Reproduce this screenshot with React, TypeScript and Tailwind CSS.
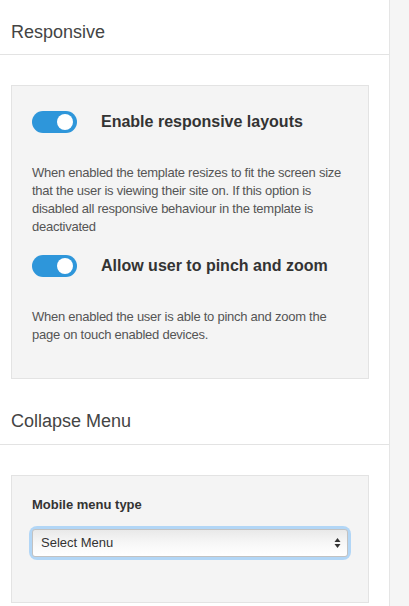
const font = { fontFamily: '"Liberation Sans", Arial, sans-serif' };

const Toggle = () => (
  <div className="relative h-[22px] w-[45px] shrink-0 rounded-full bg-[#2e96da]">
    <span className="absolute right-[4px] top-[3px] h-[16px] w-[16px] rounded-full bg-white" />
  </div>
);

const ToggleOption = ({ label, help }: { label: string; help: string }) => (
  <div>
    <div className="flex items-center gap-[24px]">
      <Toggle />
      <span className="text-[16px] font-bold leading-[22px] text-[#333]">{label}</span>
    </div>
    <p className="mt-[31px] text-[13px] leading-[18px] tracking-[-0.25px] text-[#555]">{help}</p>
  </div>
);

const SelectBox = () => (
  <div className="rounded-[5px] shadow-[0_0_0_3px_#b2d6f6]">
    <div className="relative flex h-[28px] items-center rounded-[3px] border border-[#c2c2c2] bg-gradient-to-b from-[#e9e9e9] via-[#f7f7f7] to-white pl-[8px] text-[13px] text-[#333]">
      Select Menu
      <svg
        className="absolute right-[6px] top-1/2 -translate-y-1/2"
        width="7"
        height="11"
        viewBox="0 0 7 11"
      >
        <path d="M3.5 0.5 L6.5 4.5 H0.5 Z" fill="#333" />
        <path d="M3.5 10.5 L6.5 6.5 H0.5 Z" fill="#333" />
      </svg>
    </div>
  </div>
);

export default function App() {
  return (
    <div className="flex min-h-[606px] w-full bg-white" style={font}>
      <div className="w-[390px] shrink-0 border-r border-[#e5e5e5] bg-white">
        <div className="flex h-[55px] items-end border-b border-[#e3e3e3] px-[11px] pb-[12px]">
          <h2 className="text-[18px] font-normal leading-[20px] text-[#444]">Responsive</h2>
        </div>

        <div className="ml-[11px] mt-[30px] w-[358px] border border-[#e3e3e3] bg-[#f4f4f4] px-[20px] pb-[34px] pt-[25px]">
          <ToggleOption
            label="Enable responsive layouts"
            help="When enabled the template resizes to fit the screen size that the user is viewing their site on. If this option is disabled all responsive behaviour in the template is deactivated"
          />
          <div className="mt-[19px]">
            <ToggleOption
              label="Allow user to pinch and zoom"
              help="When enabled the user is able to pinch and zoom the page on touch enabled devices."
            />
          </div>
        </div>

        <div className="flex h-[66px] items-end border-b border-[#e3e3e3] px-[11px] pb-[13px]">
          <h2 className="text-[18px] font-normal leading-[20px] text-[#444]">Collapse Menu</h2>
        </div>

        <div className="ml-[11px] mt-[30px] w-[358px] border border-[#e3e3e3] bg-[#f4f4f4] px-[20px] pb-[45px] pt-[20px]">
          <label className="block text-[13px] font-bold leading-[18px] text-[#333]">
            Mobile menu type
          </label>
          <div className="mt-[15px]">
            <SelectBox />
          </div>
        </div>
      </div>
      <div className="flex-1 bg-[#f5f5f5]" />
    </div>
  );
}
